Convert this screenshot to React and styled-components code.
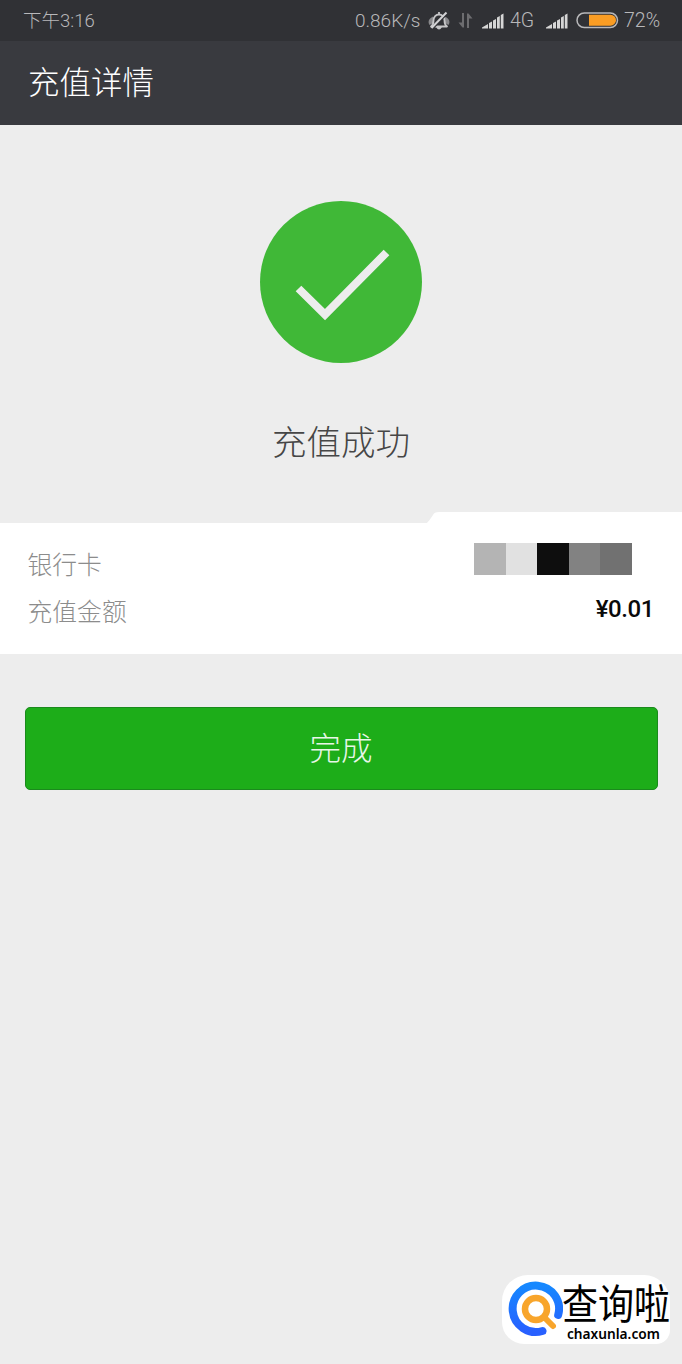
import React from "react";
import styled, { createGlobalStyle } from "styled-components";

const GlobalStyle = createGlobalStyle`
  * {
    box-sizing: border-box;
  }
  body {
    margin: 0;
    background: #ededed;
    font-family: Roboto, "Noto Sans CJK SC", sans-serif;
    font-weight: 300;
  }
`;

const Page = styled.div`
  position: relative;
  display: flex;
  flex-direction: column;
  height: 1364px;
  overflow: hidden;
  background: #ededed;
`;

const StatusBar = styled.div`
  display: flex;
  justify-content: space-between;
  align-items: center;
  height: 41px;
  padding: 0 22px 0 23px;
  background: #303135;
  color: #b8b8ba;
  font-family: Roboto, "Noto Sans CJK SC", sans-serif;
  line-height: 24px;
`;

const StatusIcons = styled.div`
  display: flex;
  align-items: center;
`;

const StatusText = styled.span`
  width: ${(props) => (props.$width ? `${props.$width}px` : "auto")};
  margin-right: ${(props) => props.$gap || 0}px;
  font-size: ${(props) => props.$size || 19.5}px;
  white-space: nowrap;
`;

const StatusIcon = styled.svg`
  display: block;
  margin-right: ${(props) => props.$gap}px;
`;

const Header = styled.header`
  display: flex;
  align-items: center;
  height: 84px;
  padding: 0 28px 6px;
  background: #393a3f;
  color: #fff;
  font-size: 31.5px;
`;

const Result = styled.section`
  display: flex;
  flex-direction: column;
  align-items: center;
  height: 398px;
  padding-top: 76px;
`;

const ResultText = styled.h1`
  margin: 55px 0 0;
  color: #464646;
  font-size: 34.5px;
  font-weight: 300;
  line-height: 50px;
`;

const Details = styled.section`
  position: relative;
  display: flex;
  flex-direction: column;
  height: 131px;
  padding: 16px 28px 0;
  background: #fff;
`;

const RaisedEdge = styled.svg`
  position: absolute;
  top: -12px;
  right: 0;
`;

const Row = styled.div`
  display: flex;
  justify-content: space-between;
  align-items: center;
  height: 47px;
`;

const Label = styled.span`
  margin-left: -0.5px;
  color: #8c8c8c;
  font-size: 24.8px;
`;

const Amount = styled.span`
  padding-bottom: 2px;
  color: #0a0a0a;
  font-family: Roboto, sans-serif;
  font-size: 24px;
  font-weight: 500;
  line-height: 30px;
  letter-spacing: -0.4px;
`;

const Mosaic = styled.div`
  display: flex;
  margin: 0 22px 8px 0;
`;

const Block = styled.i`
  width: 31.6px;
  height: 32px;
  background: ${(props) => props.$color};
`;

const DoneButton = styled.button`
  height: 83px;
  margin: 53px 24.5px 0;
  padding: 0 0 5px;
  border: 1px solid #1b8a1d;
  border-radius: 5px;
  background: #1dad19;
  color: #e8f6e8;
  font-family: inherit;
  font-size: 31.5px;
  font-weight: 300;
`;

const Watermark = styled.div`
  position: absolute;
  left: 502px;
  top: 1275px;
  display: flex;
  width: 168px;
  height: 69px;
  border-radius: 26px 26px 14px 22px;
  background: #fff;
`;

const Brand = styled.div`
  display: flex;
  flex-direction: column;
  margin-left: -1px;
  color: #000;
`;

const BrandName = styled.span`
  height: 50px;
  font-family: "Noto Sans CJK SC", sans-serif;
  font-size: 36px;
  font-weight: 400;
  line-height: 50px;
  white-space: nowrap;
  transform: translateY(1px) scaleY(1.14);
`;

const BrandUrl = styled.span`
  margin-left: 5px;
  font-family: "Noto Sans", sans-serif;
  font-size: 13.7px;
  font-weight: 600;
  line-height: 17px;
`;

const blocks = ["#b4b4b4", "#e1e1e1", "#0e0e0e", "#828282", "#717171"];

const Signal = ({ gap }) => (
  <StatusIcon $gap={gap} width="22" height="16" viewBox="0 0 22 16">
    <path
      d="M0 15.5V14.500l6-3.500v4.500zM7 10l3-1.500v7H7zM11 7.500l3-1.500v9.500h-3zM15 4.500l2.800-1.500v12.500H15zM18.800 2L21.500.5v15h-2.700z"
      fill="#d6d6d6"
    />
  </StatusIcon>
);

const Muted = () => (
  <StatusIcon $gap={8} width="22" height="20" viewBox="0 0 22 20">
    <path d="M5 5.500Q-1.500 9 1.500 14L5 12zM17 5.500q6.500 3.500 3.500 8.500L17 12z" fill="#88888b" />
    <path
      d="M3 15.500c2-1.500 2.500-3 2.500-6C5.500 6 8 3.500 11 3.500s5.500 2.500 5.500 6c0 3 .5 4.500 2.500 6zM11 1v2"
      fill="#303135"
      stroke="#c6c6c8"
      strokeWidth="1.800"
      strokeLinejoin="round"
    />
    <path d="M8 16h6q-3 5-6 0z" fill="#c6c6c8" />
    <path d="M4.500 18L19 3" stroke="#303135" strokeWidth="1.500" />
    <path d="M3.500 17L18.500 1.500" stroke="#d2d2d4" strokeWidth="2" />
  </StatusIcon>
);

const DataArrows = () => (
  <StatusIcon $gap={9} width="15" height="17" viewBox="0 0 15 17">
    <path d="M4 1h2v14.500H4.500L.5 10.500H4zM9 16V1.500h1.500L14.500 6.500H11V16z" fill="#6d6d70" />
  </StatusIcon>
);

const Battery = () => (
  <StatusIcon $gap={5} width="43" height="17" viewBox="0 0 43 17">
    <rect x="1" y="1" width="40.500" height="14.500" rx="7.250" fill="none" stroke="#b8b8ba" strokeWidth="1.500" />
    <path d="M13 2.700h21.500a5.500 5.500 0 0 1 0 11H13z" fill="#fa9d24" />
  </StatusIcon>
);

const App = () => {
  return (
    <Page>
      <GlobalStyle />
      <StatusBar>
        <StatusText $size={18.5}>下午3:16</StatusText>
        <StatusIcons>
          <StatusText $width={65} $gap={8} $size={19}>
            0.86K/s
          </StatusText>
          <Muted />
          <DataArrows />
          <Signal gap={6} />
          <StatusText $width={26} $gap={10}>
            4G
          </StatusText>
          <Signal gap={8} />
          <Battery />
          <StatusText $width={36}>72%</StatusText>
        </StatusIcons>
      </StatusBar>
      <Header>充值详情</Header>
      <Result>
        <svg width="162" height="162" viewBox="0 0 162 162">
          <circle cx="81" cy="81" r="81" fill="#40b837" />
          <path d="M38.500 87.500L65 113.500 126.500 51.500" fill="none" stroke="#ededed" strokeWidth="8" />
        </svg>
        <ResultText>充值成功</ResultText>
      </Result>
      <Details>
        <RaisedEdge width="256" height="13" viewBox="0 0 256 13">
          <path d="M0 13Q4 9 7 4 8 1 13 1H256V13z" fill="#fff" />
        </RaisedEdge>
        <Row>
          <Label>银行卡</Label>
          <Mosaic>
            {blocks.map((color) => (
              <Block key={color} $color={color} />
            ))}
          </Mosaic>
        </Row>
        <Row>
          <Label>充值金额</Label>
          <Amount>¥0.01</Amount>
        </Row>
      </Details>
      <DoneButton>完成</DoneButton>
      <Watermark>
        <svg width="61" height="69" viewBox="0 0 61 69">
          <defs>
            <linearGradient id="ring" x1="0" y1="0" x2="0" y2="1">
              <stop offset="0" stopColor="#1688ff" />
              <stop offset="1" stopColor="#2860ff" />
            </linearGradient>
          </defs>
          <path
            d="M56.200 40A23.200 23.200 0 1 0 40.500 56"
            fill="none"
            stroke="url(#ring)"
            strokeWidth="8"
            strokeLinecap="round"
          />
          <circle cx="34" cy="34" r="11" fill="none" stroke="#f8a52b" strokeWidth="6.500" />
          <path d="M42 42l9 9" stroke="#f8a52b" strokeWidth="6" strokeLinecap="round" />
        </svg>
        <Brand>
          <BrandName>查询啦</BrandName>
          <BrandUrl>chaxunla.com</BrandUrl>
        </Brand>
      </Watermark>
    </Page>
  );
};

export default App;
